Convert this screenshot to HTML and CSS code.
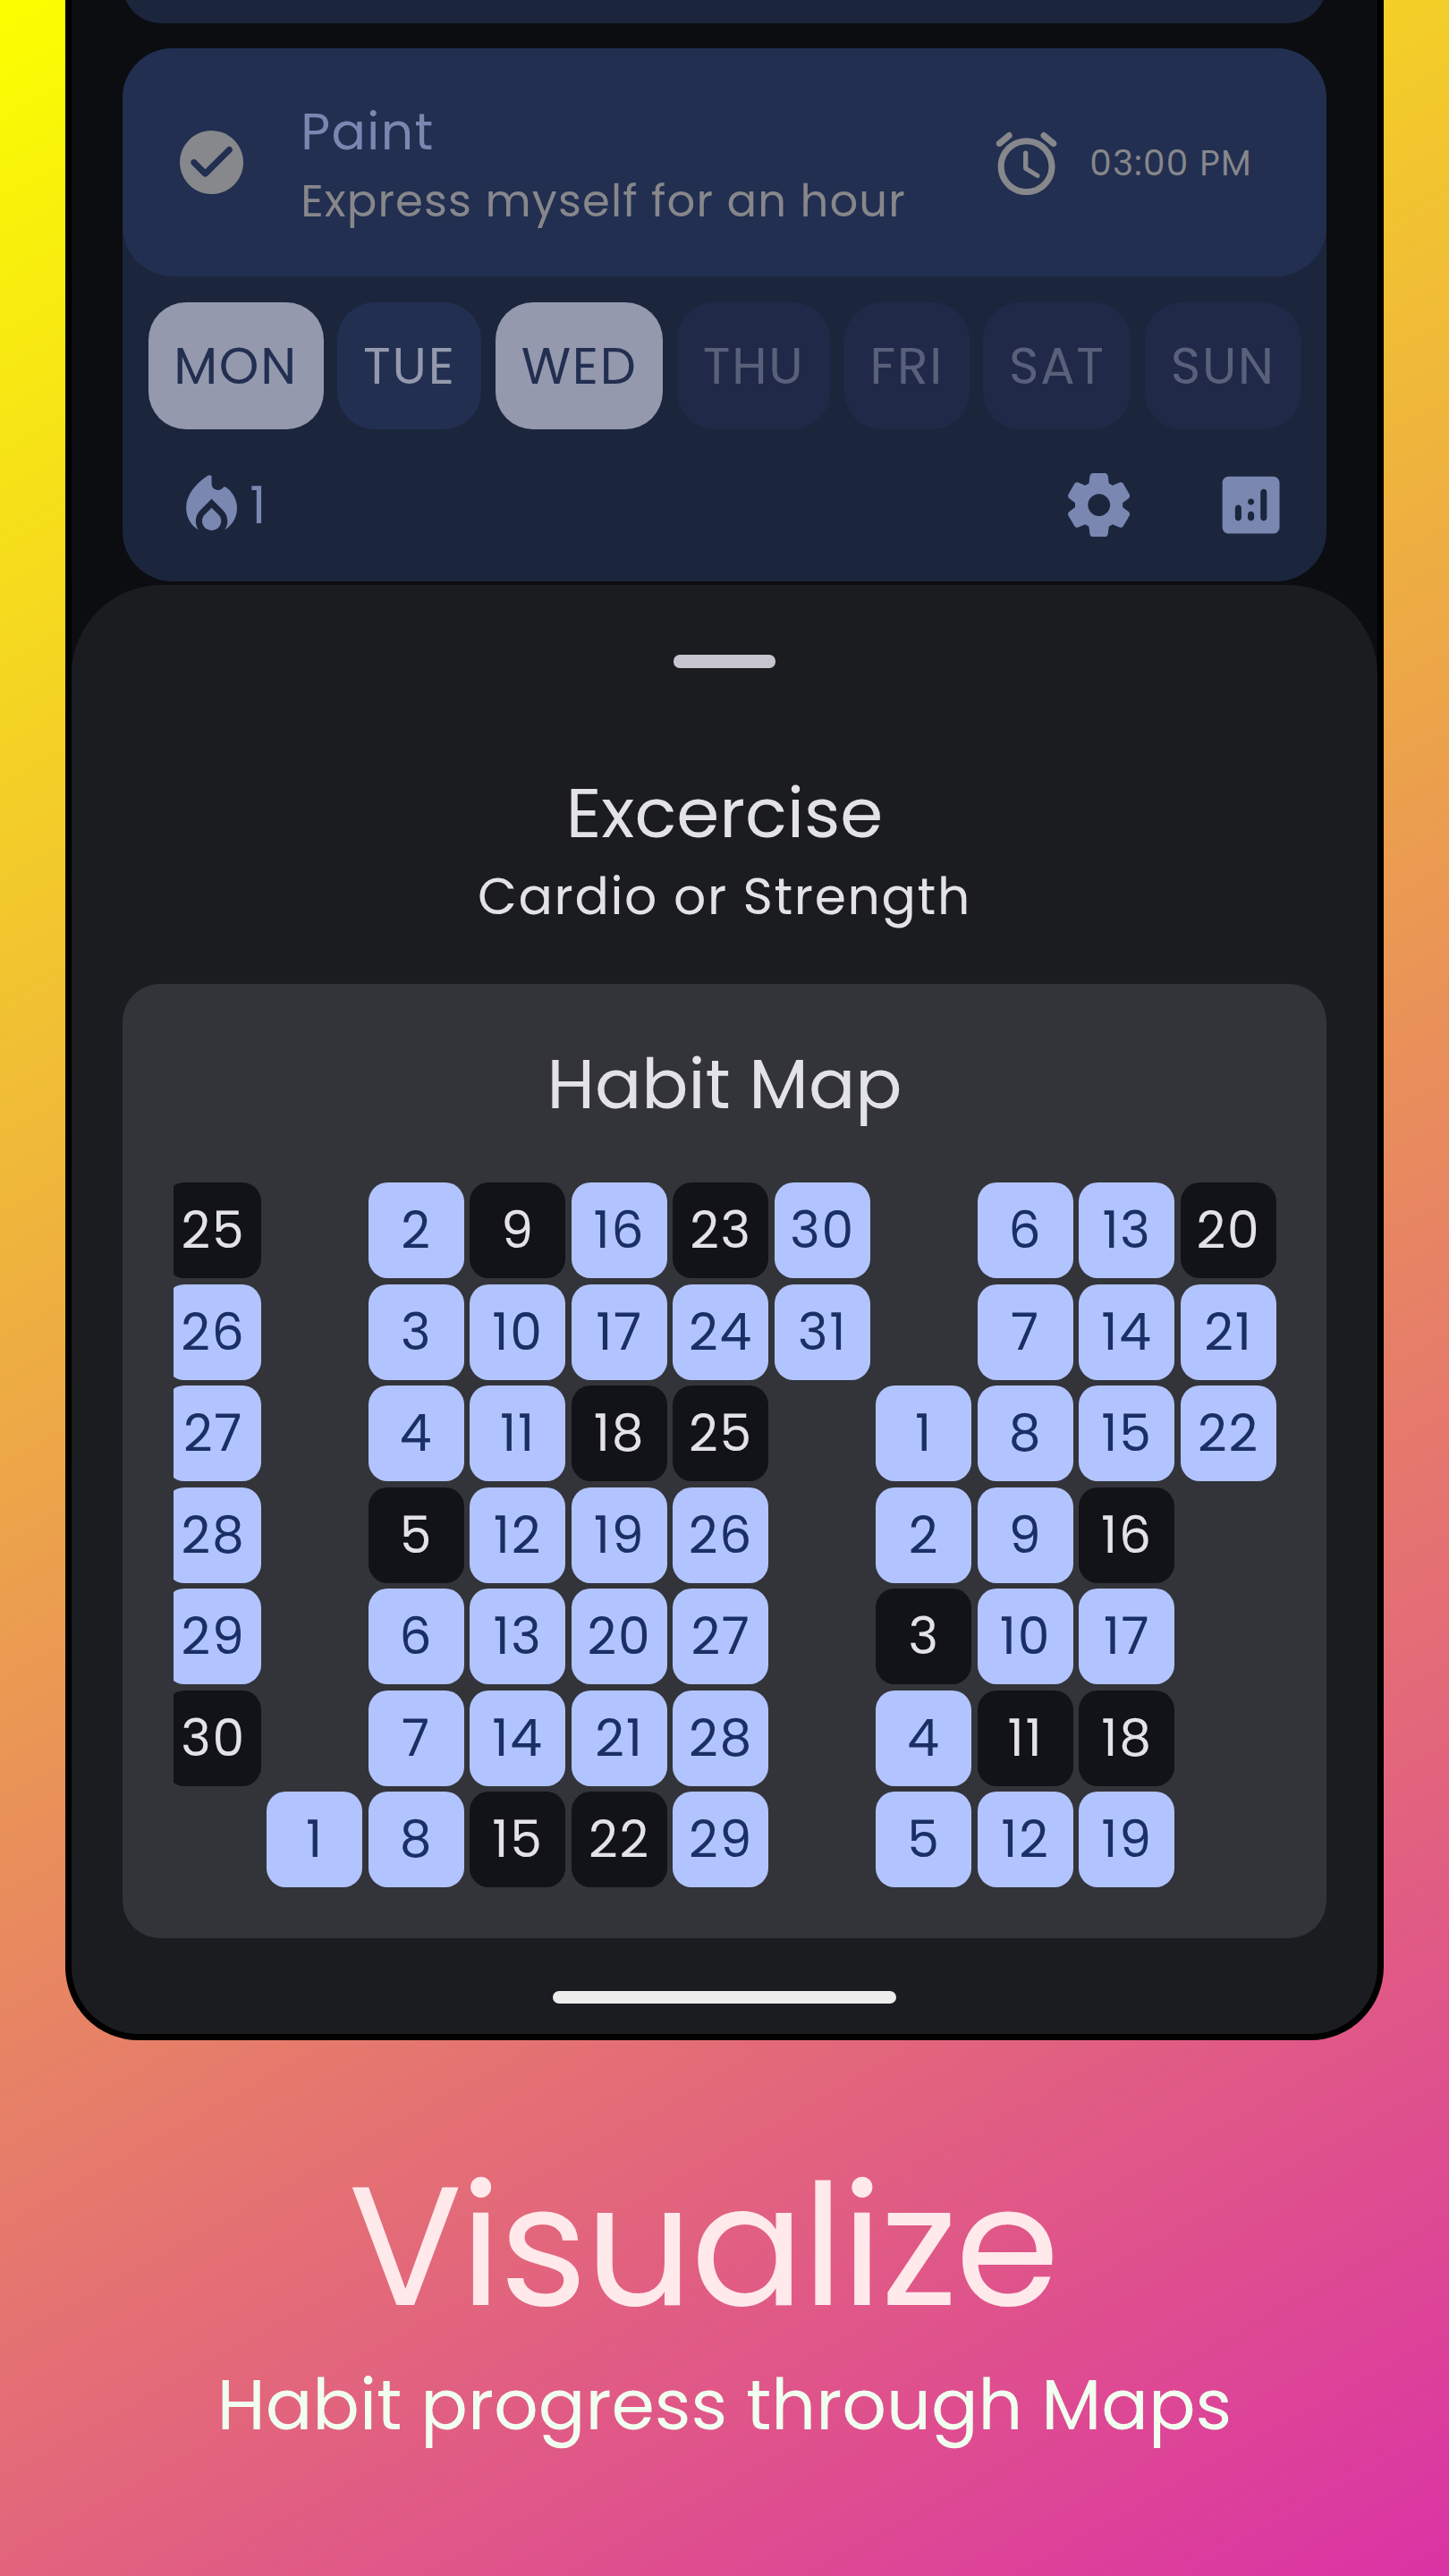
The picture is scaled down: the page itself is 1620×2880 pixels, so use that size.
FILE: index.html
```
<!DOCTYPE html>
<html lang="en">
<head>
<meta charset="utf-8">
<title>Visualize – Habit progress through Maps</title>
<link rel="stylesheet" href="styles.css">
</head>
<body>
<main class="phone">
  <section class="habits">
    <div class="card card-previous"></div>
    <article class="card">
      <header class="card-header">
        <svg class="icon icon-muted" viewBox="0 0 24 24"><path d="M12 2C6.48 2 2 6.48 2 12s4.48 10 10 10 10-4.48 10-10S17.52 2 12 2zM9.29 16.29L5.7 12.7c-.39-.39-.39-1.02 0-1.41.39-.39 1.02-.39 1.41 0L10 14.17l6.88-6.88c.39-.39 1.02-.39 1.41 0 .39.39.39 1.02 0 1.41l-7.59 7.59c-.38.39-1.02.39-1.41 0z"/></svg>
        <div class="card-text">
          <div class="card-title">Paint</div>
          <div class="card-note">Express myself for an hour</div>
        </div>
        <div class="reminder">
          <svg class="icon icon-muted" viewBox="0 0 24 24"><path d="M15.87 15.25l-3.37-2V8.72c0-.4-.32-.72-.72-.72h-.06c-.4 0-.72.32-.72.72v4.72c0 .35.18.68.49.86l3.65 2.19c.34.2.78.1.98-.24.21-.35.1-.8-.25-1zm5.31-10.24L18.1 2.45c-.42-.35-1.05-.3-1.41.13-.35.42-.29 1.05.13 1.41l3.07 2.56c.42.35 1.05.3 1.41-.13.36-.42.3-1.05-.12-1.41zM4.1 6.55l3.07-2.56c.43-.36.49-.99.13-1.41-.35-.43-.98-.48-1.4-.13L2.82 5.01c-.42.36-.48.99-.12 1.41.35.43.98.48 1.4.13zM12 4c-4.97 0-9 4.03-9 9s4.03 9 9 9 9-4.03 9-9-4.03-9-9-9zm0 16c-3.86 0-7-3.14-7-7s3.14-7 7-7 7 3.14 7 7-3.14 7-7 7z"/></svg>
          <span>03:00 PM</span>
        </div>
      </header>
      <div class="days">
        <span class="day day-done">MON</span><span class="day">TUE</span><span class="day day-done">WED</span><span class="day day-off">THU</span><span class="day day-off">FRI</span><span class="day day-off">SAT</span><span class="day day-off">SUN</span>
      </div>
      <footer class="actions">
        <svg class="icon" viewBox="0 0 24 24"><path d="M12 12.9l-2.13 2.09c-.56.56-.87 1.29-.87 2.07C9 18.68 10.35 20 12 20s3-1.32 3-2.94c0-.78-.31-1.52-.87-2.07L12 12.9z"/><path d="M15.56 6.55C14.38 8.02 12 7.19 12 5.3V3.2c0-.6-.7-.8-1.2-.45C8.3 4.4 4 7.9 4 13c0 2.92 1.56 5.47 3.89 6.86-.56-.79-.89-1.76-.89-2.8 0-1.32.52-2.56 1.47-3.5L12 10.1l3.53 3.47c.95.93 1.47 2.17 1.47 3.5 0 1.02-.31 1.96-.85 2.75 1.89-1.15 3.29-3.06 3.71-5.3.6-3.2-.8-6.2-3.16-7.95-.4-.3-.8-.4-1.14-.02z"/></svg>
        <span class="streak">1</span>
        <svg class="icon icon-settings" viewBox="0 0 24 24"><path d="M19.5 12c0-.23-.01-.45-.03-.68l1.86-1.41c.4-.3.51-.86.26-1.3l-1.87-3.23c-.25-.44-.79-.62-1.25-.42l-2.15.91c-.37-.26-.76-.49-1.17-.68l-.29-2.31c-.06-.5-.49-.88-.99-.88h-3.73c-.51 0-.94.38-1 .88l-.29 2.31c-.41.19-.8.42-1.17.68l-2.15-.91c-.46-.2-1-.02-1.25.42L2.41 8.62c-.25.44-.14.99.26 1.3l1.86 1.41c-.02.22-.03.44-.03.67s.01.45.03.68l-1.86 1.41c-.4.3-.51.86-.26 1.3l1.87 3.23c.25.44.79.62 1.25.42l2.15-.91c.37.26.76.49 1.17.68l.29 2.31c.06.5.49.88.99.88h3.73c.5 0 .93-.38.99-.88l.29-2.31c.41-.19.8-.42 1.17-.68l2.15.91c.46.2 1 .02 1.25-.42l1.87-3.23c.25-.44.14-.99-.26-1.3l-1.86-1.41c.03-.23.04-.45.04-.68zm-7.46 3.5c-1.93 0-3.5-1.57-3.5-3.5s1.57-3.5 3.5-3.5 3.5 1.57 3.5 3.5-1.57 3.5-3.5 3.5z"/></svg>
        <svg class="icon" viewBox="0 0 24 24"><path d="M19 3H5c-1.1 0-2 .9-2 2v14c0 1.1.9 2 2 2h14c1.1 0 2-.9 2-2V5c0-1.1-.9-2-2-2zM8 17c-.55 0-1-.45-1-1v-3c0-.55.45-1 1-1s1 .45 1 1v3c0 .55-.45 1-1 1zm4 0c-.55 0-1-.45-1-1v-1c0-.55.45-1 1-1s1 .45 1 1v1c0 .55-.45 1-1 1zm0-5c-.55 0-1-.45-1-1s.45-1 1-1 1 .45 1 1-.45 1-1 1zm4 5c-.55 0-1-.45-1-1V8c0-.55.45-1 1-1s1 .45 1 1v8c0 .55-.45 1-1 1z"/></svg>
      </footer>
    </article>
  </section>

  <section class="sheet">
    <div class="handle"></div>
    <h2 class="sheet-title">Excercise</h2>
    <p class="sheet-note">Cardio or Strength</p>
    <div class="panel">
      <h3 class="panel-title">Habit Map</h3>
      <div class="map-view">
        <div class="map">
          <b class="miss">25</b><b>26</b><b>27</b><b>28</b><b>29</b><b class="miss">30</b><i></i>
          <i></i><i></i><i></i><i></i><i></i><i></i><b>1</b>
          <b>2</b><b>3</b><b>4</b><b class="miss">5</b><b>6</b><b>7</b><b>8</b>
          <b class="miss">9</b><b>10</b><b>11</b><b>12</b><b>13</b><b>14</b><b class="miss">15</b>
          <b>16</b><b>17</b><b class="miss">18</b><b>19</b><b>20</b><b>21</b><b class="miss">22</b>
          <b class="miss">23</b><b>24</b><b class="miss">25</b><b>26</b><b>27</b><b>28</b><b>29</b>
          <b>30</b><b>31</b><i></i><i></i><i></i><i></i><i></i>
          <i></i><i></i><b>1</b><b>2</b><b class="miss">3</b><b>4</b><b>5</b>
          <b>6</b><b>7</b><b>8</b><b>9</b><b>10</b><b class="miss">11</b><b>12</b>
          <b>13</b><b>14</b><b>15</b><b class="miss">16</b><b>17</b><b class="miss">18</b><b>19</b>
          <b class="miss">20</b><b>21</b><b>22</b>
        </div>
      </div>
    </div>
    <div class="home-bar"></div>
  </section>
</main>
<h1 class="headline">Visualize</h1>
<p class="tagline">Habit progress through Maps</p>
</body>
</html>
```
FILE: styles.css
```
* { box-sizing: border-box; margin: 0; padding: 0; }

body {
  width: 1620px;
  height: 2880px;
  overflow: hidden;
  display: flex;
  flex-direction: column;
  align-items: center;
  background: linear-gradient(150.64deg, #fbff00, #da33a5);
  font-family: Poppins, Inter, sans-serif;
  font-size: 56.8px;
  letter-spacing: 1.775px;
  white-space: nowrap;
}

.phone {
  width: 1474px;
  height: 2281px;
  flex: none;
  display: flex;
  flex-direction: column;
  background: #0b0d10;
  border: 7px solid #000;
  border-top: 0;
  border-radius: 0 0 82px 82px;
  overflow: hidden;
}

/* Habit list behind the sheet */
.habits {
  flex: none;
  height: 653.5px;
  padding: 0 57px;
  display: flex;
  flex-direction: column;
  gap: 28px;
}
.card { height: 596px; flex: none; border-radius: 56px; background: #1b263d; }
.card-previous { height: 86px; margin-top: -60px; }
.card-header {
  height: 255px;
  padding: 1px 83px 0 57px;
  display: flex;
  align-items: center;
  border-radius: 56px;
  background: #222f51;
}
.icon { width: 85.2px; height: 85.2px; flex: none; fill: #7a87b1; }
.icon-muted { fill: #87888b; }
.card-text { margin-left: 57px; padding-top: 6px; }
.card-title { letter-spacing: 1.45px; line-height: 80px; color: #7a87b1; }
.card-note { font-size: 49.7px; letter-spacing: 1.12px; line-height: 76px; color: #87878b; }
.reminder {
  margin-left: auto;
  display: flex;
  align-items: center;
  gap: 28.5px;
  padding-top: 1px;
  font-size: 39px;
  letter-spacing: 1.3px;
  line-height: 40px;
  color: #87878b;
}

.days { display: flex; justify-content: space-between; padding: 28.5px 28.5px 0; }
.day {
  height: 142px;
  padding: 0 28.7px;
  border-radius: 42px;
  line-height: 142px;
  background: #222f51;
  color: #9599ad;
}
.day-done { background: #9599ad; color: #222f51; }
.day-off { background: #202a48; color: #59607a; }

.actions { height: 171px; padding: 0 42px 0 57px; display: flex; align-items: center; }
.streak { color: #7a87b1; }
.icon-settings { margin: 0 85px 0 auto; }

/* Bottom sheet */
.sheet {
  flex: 1;
  padding: 78.5px 57px 0;
  display: flex;
  flex-direction: column;
  align-items: center;
  background: #1b1c20;
  border-radius: 100px 100px 0 0;
  color: #e3e2e6;
}
.handle { width: 114px; height: 15px; border-radius: 7px; background: #c6c5d0; }
.sheet-title, .panel-title { font-size: 77.3px; font-weight: 400; letter-spacing: 0; }
.sheet-title { margin-top: 112px; line-height: 101px; }
.sheet-note { letter-spacing: 1.65px; line-height: 85px; }
.panel {
  width: 1346px;
  height: 1067px;
  margin-top: 54.5px;
  padding: 62.5px 56.5px 0;
  border-radius: 42px;
  background: #333439;
}
.panel-title { line-height: 100px; text-align: center; }

/* Calendar: one column per week, the oldest week is cut by the viewport */
.map-view { margin-top: 60px; display: flex; justify-content: flex-end; overflow: hidden; }
.map {
  display: grid;
  grid-template-rows: repeat(7, 107px);
  grid-auto-columns: 107px;
  grid-auto-flow: column;
  gap: 6.5px;
}
.map b {
  padding-left: 1px;
  border-radius: 21.3px;
  background: #b2c4ff;
  color: #1a3065;
  font-weight: 400;
  line-height: 107px;
  text-align: center;
}
.map .miss { background: #121318; color: #e3e2e6; }

.home-bar { width: 384px; height: 14px; margin-top: 59.5px; border-radius: 7px; background: #ececec; }

/* Caption */
.headline {
  margin-top: 131px;
  padding-right: 48px;
  font-size: 188px;
  font-weight: 400;
  letter-spacing: -0.0125em;
  line-height: 200px;
  color: #ffe9eb;
}
.tagline { margin-top: 22px; font-size: 77.9px; letter-spacing: 0; line-height: 110px; color: #f1fff1; }
```
